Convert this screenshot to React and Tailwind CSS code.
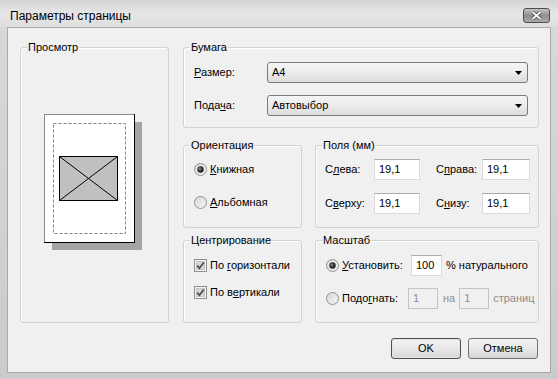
import React from 'react';

const Radio = ({ checked }) => (
  <svg width="13" height="13" viewBox="0 0 13 13" className="shrink-0">
    <defs>
      <linearGradient id="radioBg" x1="0" y1="0" x2="1" y2="1">
        <stop offset="0" stopColor="#d2d2d2" />
        <stop offset="1" stopColor="#fbfbfb" />
      </linearGradient>
      <radialGradient id="radioDot" cx="0.4" cy="0.4" r="0.7">
        <stop offset="0" stopColor="#9a9a9a" />
        <stop offset="0.5" stopColor="#2e2e2e" />
        <stop offset="1" stopColor="#1c1c1c" />
      </radialGradient>
    </defs>
    <circle cx="6.5" cy="6.5" r="6" fill="url(#radioBg)" stroke="#929292" />
    <circle cx="6.5" cy="6.5" r="4.5" fill="none" stroke="#e6e6e6" />
    {checked && <circle cx="6.5" cy="6.5" r="3.2" fill="url(#radioDot)" />}
  </svg>
);

const Check = () => (
  <svg width="13" height="13" viewBox="0 0 13 13" className="shrink-0">
    <rect x="0.5" y="0.5" width="12" height="12" fill="#f6f6f6" stroke="#8e8e8e" />
    <rect x="2.5" y="2.5" width="8" height="8" fill="#d6d6d6" stroke="#c4c4c4" />
    <path d="M3.2 6.6 L5.4 9.2 L9.8 3.4" stroke="#4a4a4a" strokeWidth="1.7" fill="none" />
  </svg>
);

const GroupBox = ({ title, className, children }) => (
  <div className={`border border-[#d2d2d2] rounded-[3px] shadow-[inset_1px_1px_0_#ffffff] ${className}`}>
    <div className="-mt-[7px] ml-[6px] w-fit px-[1px] bg-[#f0f0f0] leading-[13px]">{title}</div>
    {children}
  </div>
);

const Combo = ({ value }) => (
  <div className="flex-1 h-[21px] flex items-center justify-between rounded-[3px] border border-[#7a7a7a] bg-gradient-to-b from-[#f5f5f5] via-[#ececec] to-[#dcdcdc] pl-[4px] pr-[5px]">
    <span>{value}</span>
    <svg width="7" height="4" viewBox="0 0 7 4">
      <path d="M0 0 H7 L3.5 4 Z" fill="#000" />
    </svg>
  </div>
);

const Field = ({ value, w, disabled }) => (
  <div
    className={`h-[21px] flex items-center pl-[4px] border ${w} ${
      disabled
        ? 'bg-[#f0f0f0] border-[#c4c4c4] text-[#8c8c8c]'
        : 'bg-white border-[#dadada] border-t-[#ababab]'
    }`}
  >
    {value}
  </div>
);

const Btn = ({ children, primary }) => (
  <div
    className={`w-[70px] h-[21px] flex items-center justify-center rounded-[3px] border bg-gradient-to-b from-[#f3f3f3] via-[#e9e9e9] to-[#d4d4d4] ${
      primary ? 'border-[#4e4e4e] shadow-[inset_0_0_0_1px_#e4e4e4]' : 'border-[#707070]'
    }`}
  >
    {children}
  </div>
);

const PagePreview = () => (
  <svg width="98" height="136" viewBox="0 0 98 136">
    <rect x="8" y="8" width="90" height="128" fill="#a4a4a4" />
    <rect x="0" y="0" width="91" height="129" fill="#ffffff" />
    <rect x="0.5" y="0.5" width="90" height="128" fill="none" stroke="#8a8a8a" />
    <path d="M90.5 0 V129 M0 128.5 H91" stroke="#000" />
    <rect x="9.5" y="9.5" width="72" height="110" fill="none" stroke="#808080" strokeDasharray="3 2" />
    <rect x="15.5" y="42.5" width="58" height="44" fill="#c0c0c0" stroke="#000" />
    <path d="M15.5 42.5 L73.5 86.5 M73.5 42.5 L15.5 86.5" stroke="#000" />
  </svg>
);

export default function App() {
  return (
    <div className="w-[558px] h-[379px] flex flex-col bg-gradient-to-b from-[#d9d9d9] to-[#cbcbcb] font-['Liberation_Sans',Arial,sans-serif] text-[11px] text-black">
      <div className="h-[27px] shrink-0 flex items-start justify-between pl-[10px] pr-[8px] bg-gradient-to-b from-[#d4d4d4] via-[#e6e6e6] to-[#dedede]">
        <span className="text-[12px] leading-[14px] mt-[9px]">Параметры страницы</span>
        <div className="mt-[8px] w-[27px] h-[15px] rounded-[3px] border border-[#4f4f4f] bg-gradient-to-b from-[#c4c4c4] via-[#8f8f8f] to-[#a9a9a9] flex items-center justify-center">
          <svg width="11" height="9" viewBox="0 0 11 9">
            <path d="M1.5 1 L9.5 8 M9.5 1 L1.5 8" stroke="#3c3c3c" strokeWidth="3.4" />
            <path d="M1.5 1 L9.5 8 M9.5 1 L1.5 8" stroke="#ffffff" strokeWidth="1.8" />
          </svg>
        </div>
      </div>

      <div className="mx-[7px] mb-[6px] flex-1 bg-[#f0f0f0] border border-[#a9a9a9] pl-[12px] pt-[19px]">
        <div className="flex gap-[14px]">
          <GroupBox title="Просмотр" className="w-[149px] h-[276px]">
            <div className="mt-[60px] ml-[23px]">
              <PagePreview />
            </div>
          </GroupBox>

          <div className="w-[356px] flex flex-col">
            <GroupBox title="Бумага" className="h-[81px]">
              <div className="flex items-center mt-[8px] px-[10px]">
                <span className="w-[73px]">
                  <span className="underline">Р</span>азмер:
                </span>
                <Combo value="A4" />
              </div>
              <div className="flex items-center mt-[12px] px-[10px]">
                <span className="w-[73px]">
                  Пода<span className="underline">ч</span>а:
                </span>
                <Combo value="Автовыбор" />
              </div>
            </GroupBox>

            <div className="flex gap-[13px] mt-[17px]">
              <GroupBox title="Ориентация" className="w-[119px] h-[83px]">
                <div className="flex items-center gap-[3px] mt-[11px] pl-[10px] leading-[13px]">
                  <Radio checked />
                  <span>
                    <span className="underline">К</span>нижная
                  </span>
                </div>
                <div className="flex items-center gap-[3px] mt-[20px] pl-[10px] leading-[13px]">
                  <Radio />
                  <span>
                    <span className="underline">А</span>льбомная
                  </span>
                </div>
              </GroupBox>

              <GroupBox title="Поля (мм)" className="w-[224px] h-[83px]">
                <div className="flex items-center mt-[7px] pl-[9px]">
                  <span className="w-[49px]">
                    С<span className="underline">л</span>ева:
                  </span>
                  <Field value="19,1" w="w-[46px]" />
                  <span className="w-[46px] ml-[16px]">
                    С<span className="underline">п</span>рава:
                  </span>
                  <Field value="19,1" w="w-[48px]" />
                </div>
                <div className="flex items-center mt-[13px] pl-[9px]">
                  <span className="w-[49px]">
                    С<span className="underline">в</span>ерху:
                  </span>
                  <Field value="19,1" w="w-[46px]" />
                  <span className="w-[46px] ml-[16px]">
                    С<span className="underline">н</span>изу:
                  </span>
                  <Field value="19,1" w="w-[48px]" />
                </div>
              </GroupBox>
            </div>

            <div className="flex gap-[13px] mt-[12px]">
              <GroupBox title="Центрирование" className="w-[119px] h-[83px]">
                <div className="flex items-center gap-[3px] mt-[12px] pl-[10px] leading-[13px]">
                  <Check />
                  <span>
                    По <span className="underline">г</span>оризонтали
                  </span>
                </div>
                <div className="flex items-center gap-[3px] mt-[14px] pl-[10px] leading-[13px]">
                  <Check />
                  <span>
                    По в<span className="underline">е</span>ртикали
                  </span>
                </div>
              </GroupBox>

              <GroupBox title="Масштаб" className="w-[224px] h-[83px]">
                <div className="flex items-center mt-[8px] pl-[10px]">
                  <Radio checked />
                  <span className="w-[69px] ml-[3px]">
                    <span className="underline">У</span>становить:
                  </span>
                  <Field value="100" w="w-[31px]" />
                  <span className="ml-[4px]">% натурального</span>
                </div>
                <div className="flex items-center mt-[12px] pl-[10px]">
                  <Radio />
                  <span className="w-[66px] ml-[3px]">
                    Подо<span className="underline">г</span>нать:
                  </span>
                  <Field value="1" w="w-[30px]" disabled />
                  <span className="ml-[5px] mr-[4px] text-[#8c8c8c]">на</span>
                  <Field value="1" w="w-[30px]" disabled />
                  <span className="ml-[4px] text-[#8c8c8c]">страниц</span>
                </div>
              </GroupBox>
            </div>
          </div>
        </div>

        <div className="flex justify-end gap-[7px] mt-[15px] pr-[12px]">
          <Btn primary>OK</Btn>
          <Btn>Отмена</Btn>
        </div>
      </div>
    </div>
  );
}
